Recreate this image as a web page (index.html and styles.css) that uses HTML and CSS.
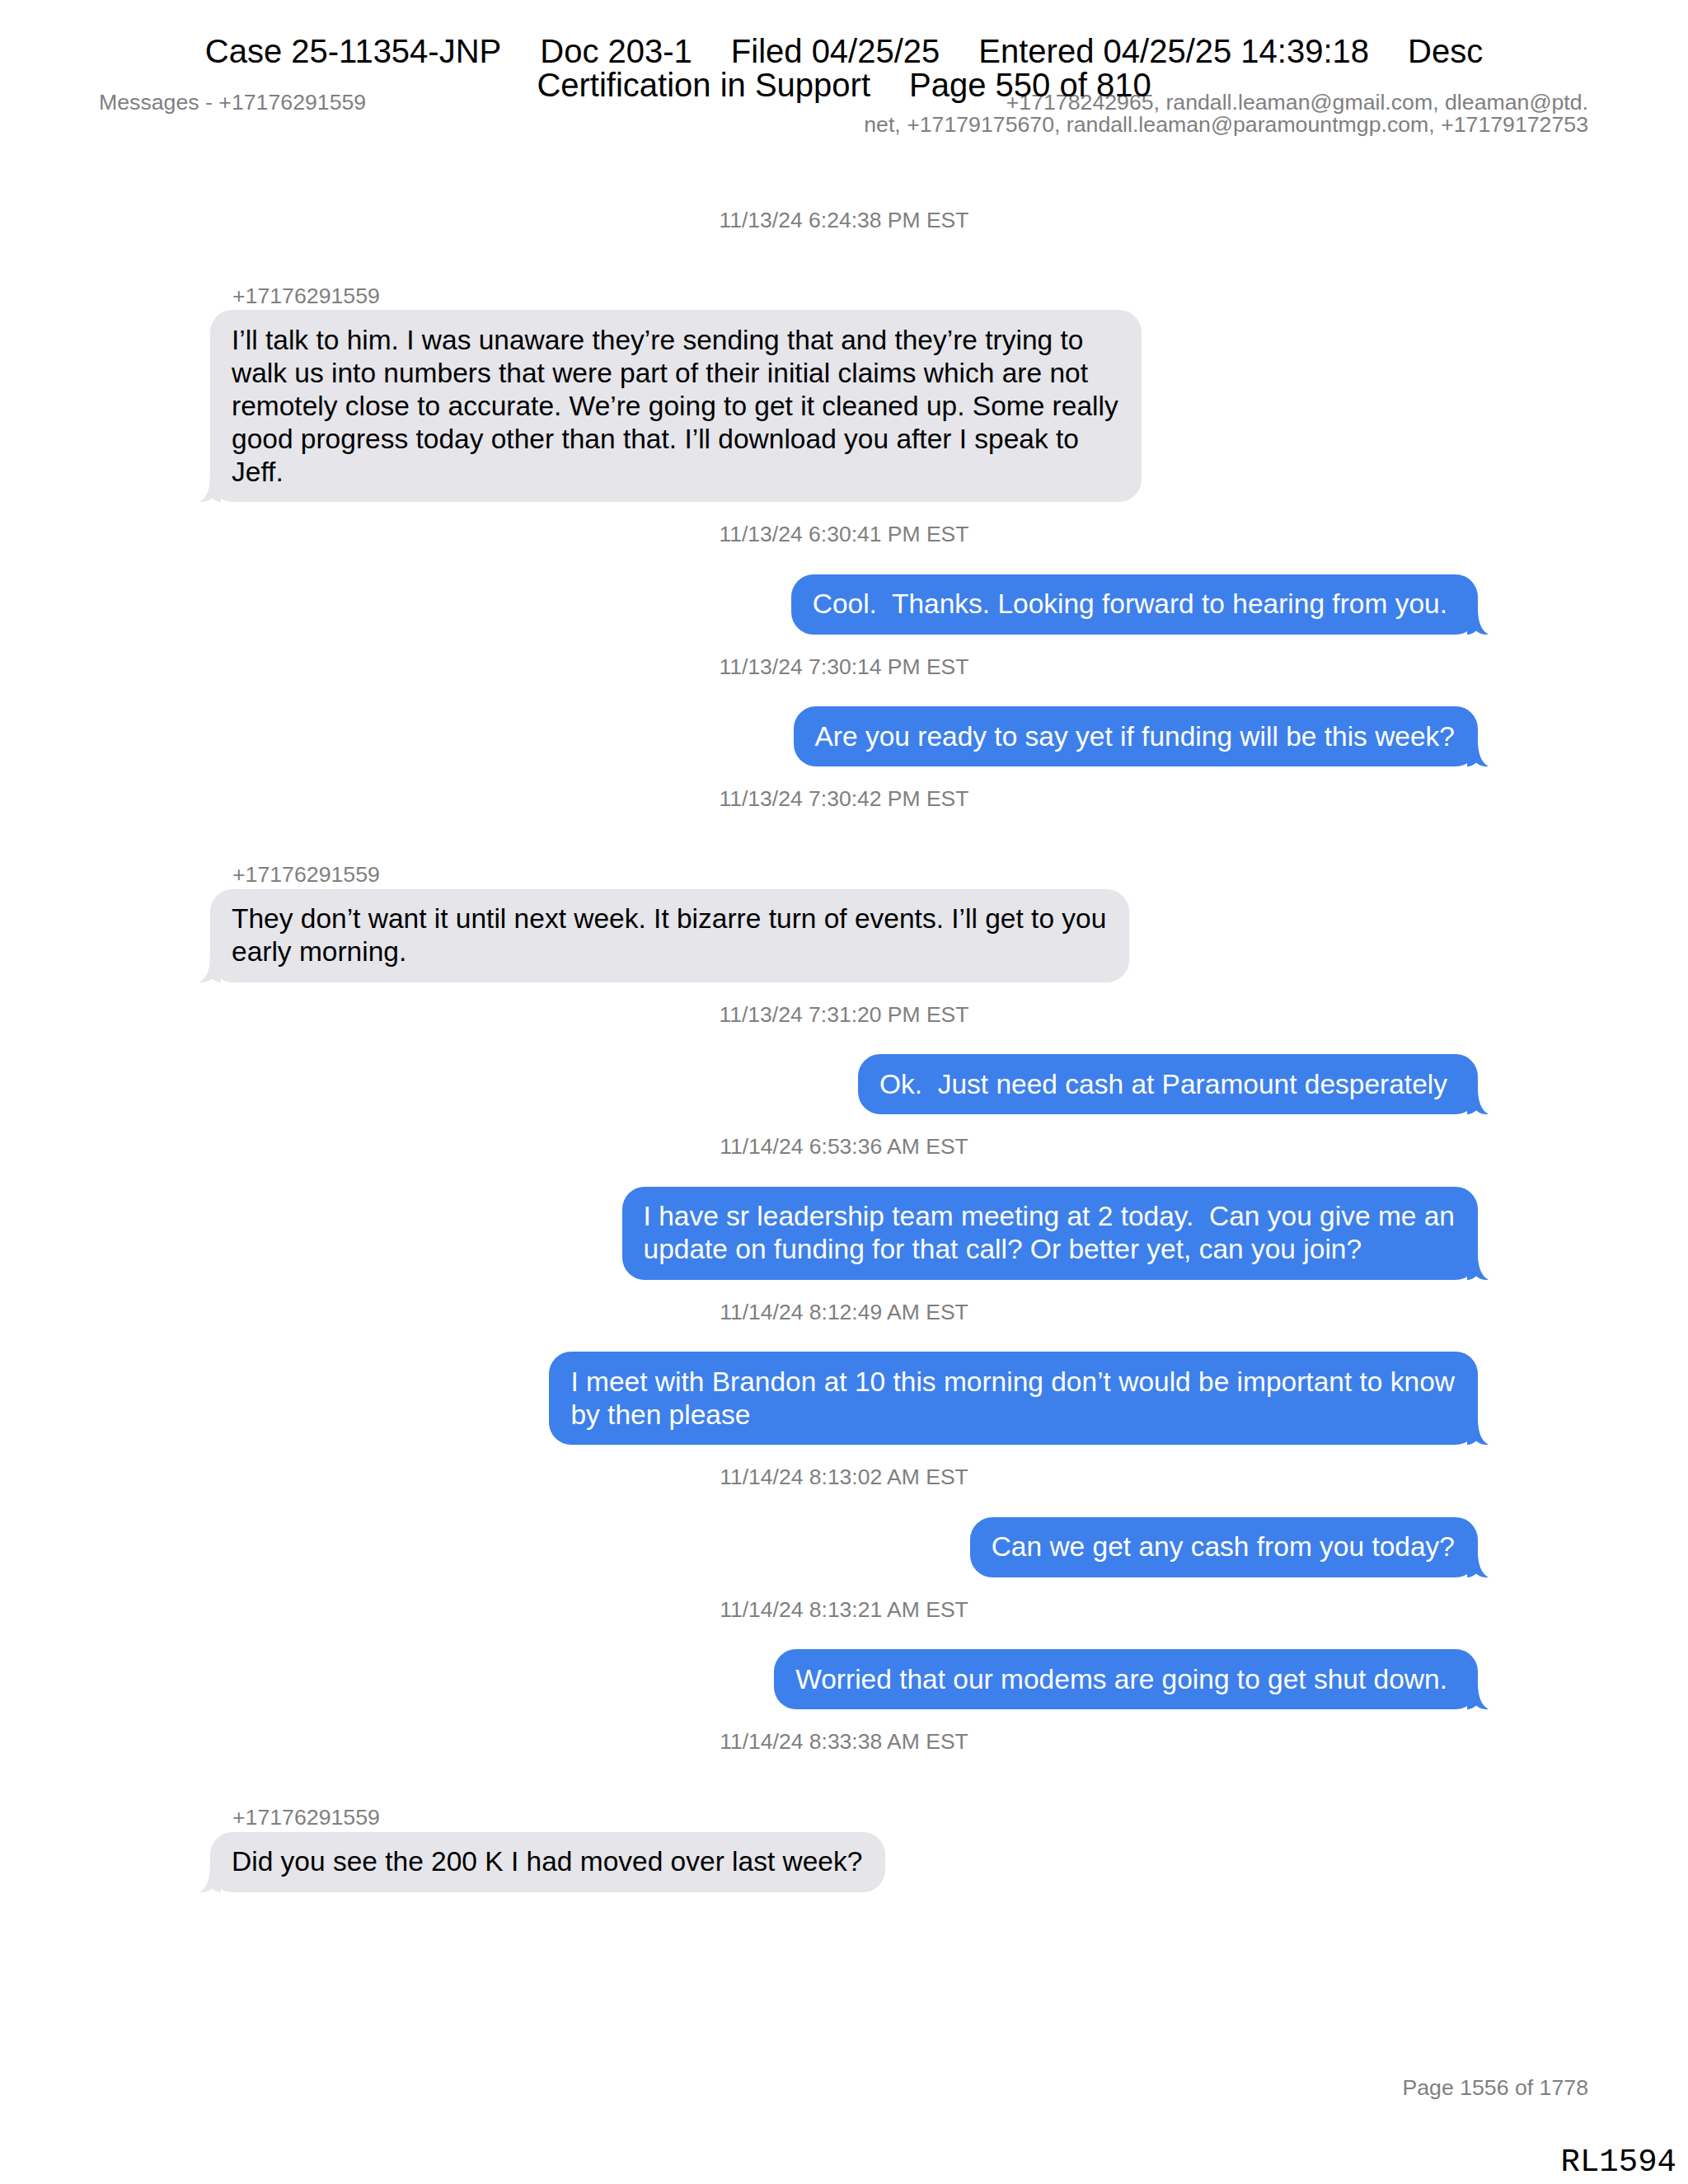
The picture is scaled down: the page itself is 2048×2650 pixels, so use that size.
FILE: index.html
```html
<!DOCTYPE html>
<html lang="en">
<head>
<meta charset="utf-8">
<title>Messages - +17176291559</title>
<link rel="stylesheet" href="styles.css">
</head>
<body>
<div class="page">
  <div class="stamp">
    <div class="stamp-line">
      <span>Case 25-11354-JNP</span><span>Doc 203-1</span><span>Filed 04/25/25</span><span>Entered 04/25/25 14:39:18</span><span>Desc</span>
    </div>
    <div class="stamp-line">
      <span>Certification in Support</span><span>Page 550 of 810</span>
    </div>
  </div>

  <header class="meta">
    <div class="meta-title">Messages - +17176291559</div>
    <div class="meta-people">+17178242965, randall.leaman@gmail.com, dleaman@ptd.<br>net, +17179175670, randall.leaman@paramountmgp.com, +17179172753</div>
  </header>

  <main class="thread">
    <div class="ts first">11/13/24 6:24:38 PM EST</div>
    <div class="sender">+17176291559</div>
    <div class="row in"><div class="bubble">I’ll talk to him. I was unaware they’re sending that and they’re trying to<br>walk us into numbers that were part of their initial claims which are not<br>remotely close to accurate. We’re going to get it cleaned up. Some really<br>good progress today other than that. I’ll download you after I speak to<br>Jeff.<svg class="tail" width="26" height="32" viewBox="0 0 26 32"><path d="M0 0H13C13 16 17 27 26 32C19 32.5 14 30 11 27.5C8 30 4 32 0 32Z"/></svg></div></div>

    <div class="ts">11/13/24 6:30:41 PM EST</div>
    <div class="row out"><div class="bubble trail">Cool.&nbsp; Thanks. Looking forward to hearing from you.<svg class="tail" width="26" height="32" viewBox="0 0 26 32"><path d="M0 0H13C13 16 17 27 26 32C19 32.5 14 30 11 27.5C8 30 4 32 0 32Z"/></svg></div></div>

    <div class="ts">11/13/24 7:30:14 PM EST</div>
    <div class="row out"><div class="bubble">Are you ready to say yet if funding will be this week?<svg class="tail" width="26" height="32" viewBox="0 0 26 32"><path d="M0 0H13C13 16 17 27 26 32C19 32.5 14 30 11 27.5C8 30 4 32 0 32Z"/></svg></div></div>

    <div class="ts">11/13/24 7:30:42 PM EST</div>
    <div class="sender">+17176291559</div>
    <div class="row in"><div class="bubble">They don’t want it until next week. It bizarre turn of events. I’ll get to you<br>early morning.<svg class="tail" width="26" height="32" viewBox="0 0 26 32"><path d="M0 0H13C13 16 17 27 26 32C19 32.5 14 30 11 27.5C8 30 4 32 0 32Z"/></svg></div></div>

    <div class="ts">11/13/24 7:31:20 PM EST</div>
    <div class="row out"><div class="bubble trail">Ok.&nbsp; Just need cash at Paramount desperately<svg class="tail" width="26" height="32" viewBox="0 0 26 32"><path d="M0 0H13C13 16 17 27 26 32C19 32.5 14 30 11 27.5C8 30 4 32 0 32Z"/></svg></div></div>

    <div class="ts">11/14/24 6:53:36 AM EST</div>
    <div class="row out"><div class="bubble">I have sr leadership team meeting at 2 today.&nbsp; Can you give me an<br>update on funding for that call? Or better yet, can you join?<svg class="tail" width="26" height="32" viewBox="0 0 26 32"><path d="M0 0H13C13 16 17 27 26 32C19 32.5 14 30 11 27.5C8 30 4 32 0 32Z"/></svg></div></div>

    <div class="ts">11/14/24 8:12:49 AM EST</div>
    <div class="row out"><div class="bubble">I meet with Brandon at 10 this morning don’t would be important to know<br>by then please<svg class="tail" width="26" height="32" viewBox="0 0 26 32"><path d="M0 0H13C13 16 17 27 26 32C19 32.5 14 30 11 27.5C8 30 4 32 0 32Z"/></svg></div></div>

    <div class="ts">11/14/24 8:13:02 AM EST</div>
    <div class="row out"><div class="bubble">Can we get any cash from you today?<svg class="tail" width="26" height="32" viewBox="0 0 26 32"><path d="M0 0H13C13 16 17 27 26 32C19 32.5 14 30 11 27.5C8 30 4 32 0 32Z"/></svg></div></div>

    <div class="ts">11/14/24 8:13:21 AM EST</div>
    <div class="row out"><div class="bubble trail">Worried that our modems are going to get shut down.<svg class="tail" width="26" height="32" viewBox="0 0 26 32"><path d="M0 0H13C13 16 17 27 26 32C19 32.5 14 30 11 27.5C8 30 4 32 0 32Z"/></svg></div></div>

    <div class="ts">11/14/24 8:33:38 AM EST</div>
    <div class="sender">+17176291559</div>
    <div class="row in"><div class="bubble">Did you see the 200 K I had moved over last week?<svg class="tail" width="26" height="32" viewBox="0 0 26 32"><path d="M0 0H13C13 16 17 27 26 32C19 32.5 14 30 11 27.5C8 30 4 32 0 32Z"/></svg></div></div>
  </main>

  <footer class="foot">
    <div class="pagenum">Page 1556 of 1778</div>
    <div class="bates">RL1594</div>
  </footer>
</div>
</body>
</html>
```

FILE: styles.css
```css
html, body {
  margin: 0;
  padding: 0;
  background: #ffffff;
}

.page {
  position: relative;
  width: 2048px;
  height: 2650px;
  overflow: hidden;
  display: flex;
  flex-direction: column;
  font-family: "Liberation Sans", Arial, sans-serif;
  color: #000000;
}

/* court filing stamp that lies over the page header */
.stamp {
  position: absolute;
  top: 42px;
  left: 0;
  right: 0;
  font-size: 40px;
  line-height: 40.5px;
  color: #000000;
  z-index: 2;
}

.stamp-line {
  display: flex;
  justify-content: center;
  gap: 47px;
  white-space: nowrap;
}

.meta {
  display: flex;
  justify-content: space-between;
  align-items: flex-start;
  padding: 111px 121px 0 120px;
  font-size: 26.7px;
  line-height: 27px;
  color: #7f7f7f;
}

.meta-people {
  text-align: right;
  white-space: nowrap;
}

.thread {
  width: 1538px;
  margin: 88.5px auto 0;
  display: flex;
  flex-direction: column;
}

.ts {
  margin-top: 26px;
  text-align: center;
  font-size: 26.5px;
  line-height: 27px;
  height: 27px;
  color: #7f7f7f;
}

.ts.first {
  margin-top: 0;
}

.sender {
  margin-top: 65px;
  padding-left: 27px;
  font-size: 26.7px;
  line-height: 27px;
  height: 27px;
  color: #7f7f7f;
}

.row {
  display: flex;
}

.row.in {
  justify-content: flex-start;
  margin-top: 3.5px;
}

.row.out {
  justify-content: flex-end;
  margin-top: 34.5px;
}

.bubble {
  position: relative;
  padding: 16.5px 28px 16.5px 26px;
  border-radius: 27px;
  font-size: 33.5px;
  line-height: 40px;
  white-space: nowrap;
}

/* messages that end in a trailing space */
.bubble.trail {
  padding-right: 37px;
}

.in .bubble {
  background: #e5e5ea;
  color: #000000;
}

.out .bubble {
  background: #3d80eb;
  color: #ffffff;
}

.tail {
  position: absolute;
  bottom: 0;
  display: block;
}

.out .tail {
  right: -13px;
  fill: #3d80eb;
}

.in .tail {
  left: -13px;
  fill: #e5e5ea;
  transform: scaleX(-1);
}

.foot {
  margin-top: auto;
  display: flex;
  flex-direction: column;
  align-items: flex-end;
  padding: 0 14px 4.5px 0;
}

.pagenum {
  margin-right: 107px;
  font-size: 26.7px;
  line-height: 27px;
  color: #7f7f7f;
}

.bates {
  margin-top: 55px;
  font-family: "Liberation Mono", "Courier New", monospace;
  font-size: 39px;
  line-height: 44px;
  color: #000000;
}
```
